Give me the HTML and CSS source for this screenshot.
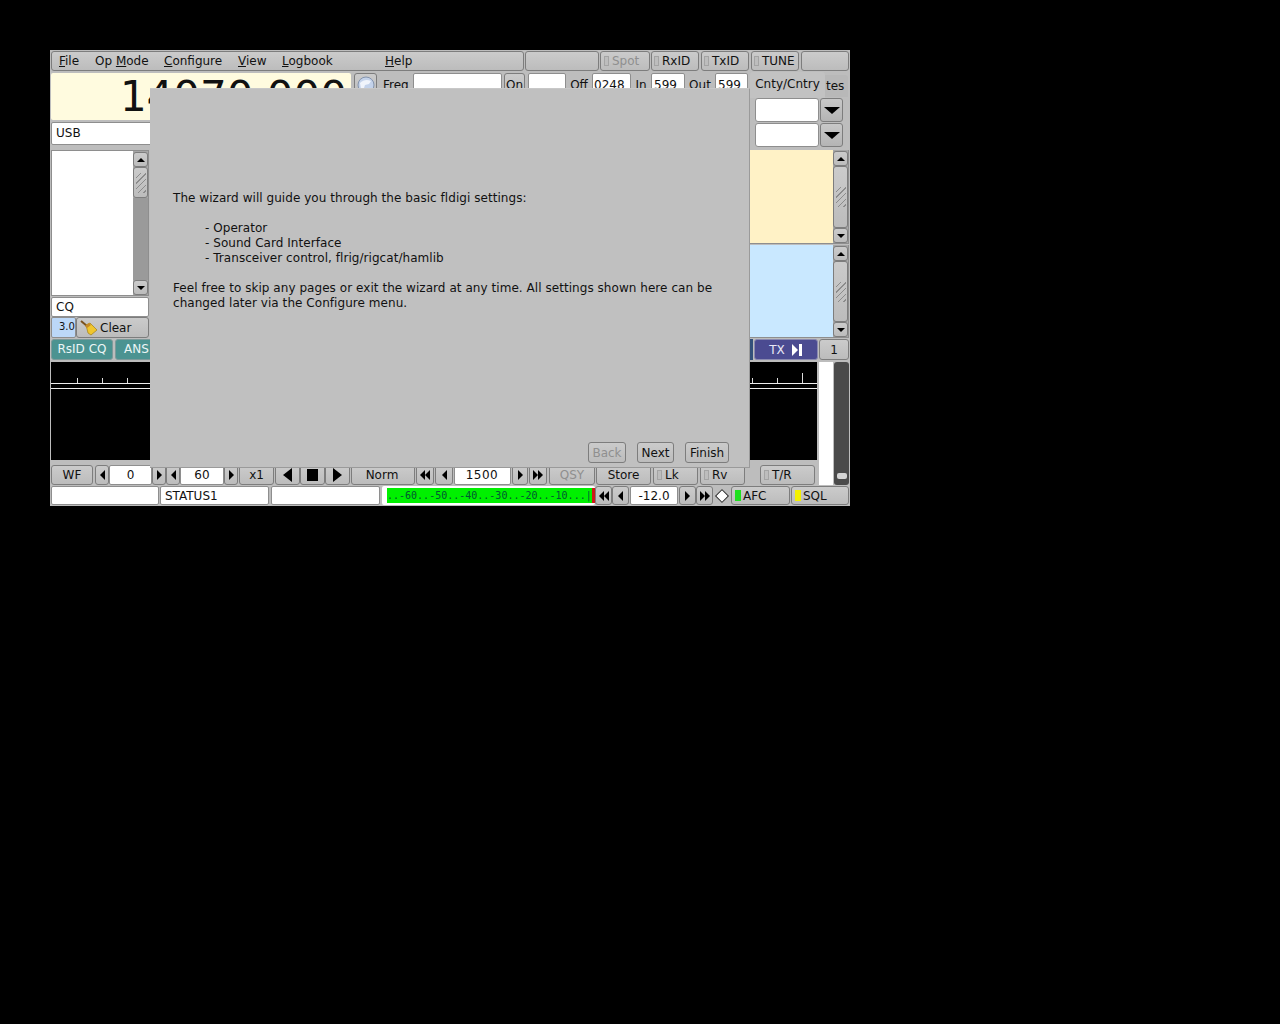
FILE: index.html
```html
<!DOCTYPE html>
<html lang="en">
<head>
  <meta charset="UTF-8" />
  <title>fldigi</title>
  <link rel="stylesheet" href="styles.css">
</head>
<body>

<div class="window">

  <!-- Menu row -->
  <div class="menu-row">
    <div class="menubar">
      <span class="menu w-file"><u>F</u>ile</span>
      <span class="menu w-mode">Op <u>M</u>ode</span>
      <span class="menu w-conf"><u>C</u>onfigure</span>
      <span class="menu w-view"><u>V</u>iew</span>
      <span class="menu w-log"><u>L</u>ogbook</span>
      <span class="menu"><u>H</u>elp</span>
    </div>
    <div class="btn w-blank"></div>
    <div class="btn w-spot dim"><i class="led"></i>Spot</div>
    <div class="btn w-rxid"><i class="led"></i>RxID</div>
    <div class="btn w-txid"><i class="led"></i>TxID</div>
    <div class="btn w-tune"><i class="led"></i>TUNE</div>
    <div class="btn w-last"></div>
  </div>

  <!-- Frequency and log fields -->
  <div class="top-row">
    <div class="freq-col">
      <div class="freq">14070.000</div>
      <div class="field usb">USB</div>
    </div>
    <div class="log-fields">
      <div class="btn globe">
        <svg width="18" height="18" viewBox="0 0 18 18">
          <circle cx="9" cy="9" r="8" fill="#c3d2ea" stroke="#8494ad"/>
          <path d="M3 7c3-3 7-4 11-2l-2 3-4 1-1 3-3 1z" fill="#f0f4fb"/>
        </svg>
      </div>
      <span class="lbl w-freq">Freq</span>
      <div class="field w-f1"></div>
      <div class="btn w-on">On</div>
      <div class="field w-f2"></div>
      <span class="lbl w-off">Off</span>
      <div class="field w-f3">0248</div>
      <span class="lbl w-in">In</span>
      <div class="field w-f4">599</div>
      <span class="lbl w-out">Out</span>
      <div class="field w-f5">599</div>
    </div>
    <div class="right-top">
      <div class="tabs">
        <div class="tab-on">Cnty/Cntry</div>
        <div class="tab-off">tes</div>
      </div>
      <div class="combo">
        <div class="field combo-in"></div>
        <div class="btn combo-btn"><i class="tri-down big"></i></div>
      </div>
      <div class="combo">
        <div class="field combo-in"></div>
        <div class="btn combo-btn"><i class="tri-down big"></i></div>
      </div>
    </div>
  </div>

  <!-- Text panes -->
  <div class="mid-row">
    <div class="left-col">
      <div class="pane pane-left">
        <div class="pane-text"></div>
        <div class="scroll">
          <div class="btn sb-end"><i class="tri-up"></i></div>
          <div class="btn sb-thumb short"><i class="grip"></i></div>
          <div class="sb-track"></div>
          <div class="btn sb-end"><i class="tri-down"></i></div>
        </div>
      </div>
      <div class="field cq">CQ</div>
      <div class="clear-row">
        <div class="spin-val">3.0</div>
        <div class="btn clear">
          <svg width="18" height="16" viewBox="0 0 18 16">
            <path d="M1 1l6 5" stroke="#7a5220" stroke-width="2"/>
            <path d="M6 5l4-2 7 7-6 5-3-2z" fill="#f0c62e" stroke="#a07e18" stroke-width=".7"/>
            <path d="M5 6l4-3 2 2-4 3z" fill="#c48a28"/>
          </svg>
          <span>Clear</span>
        </div>
      </div>
    </div>
    <div class="mid-gap"></div>
    <div class="right-col">
      <div class="pane pane-rx">
        <div class="pane-text yellow"></div>
        <div class="scroll">
          <div class="btn sb-end"><i class="tri-up"></i></div>
          <div class="btn sb-thumb"><i class="grip"></i></div>
          <div class="btn sb-end"><i class="tri-down"></i></div>
        </div>
      </div>
      <div class="pane pane-tx">
        <div class="pane-text blue"></div>
        <div class="scroll">
          <div class="btn sb-end"><i class="tri-up"></i></div>
          <div class="btn sb-thumb"><i class="grip"></i></div>
          <div class="btn sb-end"><i class="tri-down"></i></div>
        </div>
      </div>
    </div>
  </div>

  <!-- Macro buttons -->
  <div class="macro-row">
    <div class="macro w-rsid">RsID CQ</div>
    <div class="macro w-ans">ANS</div>
    <div class="macro-gap"></div>
    <div class="macro-edge"></div>
    <div class="tx">TX
      <svg width="12" height="12" viewBox="0 0 12 12"><path d="M1 0l6 6-6 6z" fill="#fff"/><path d="M8 0h3v12H8z" fill="#fff"/></svg>
    </div>
    <div class="btn bank">1</div>
  </div>

  <!-- Waterfall, its controls and the signal slider -->
  <div class="wf-row">
    <div class="wf-main">
      <div class="wf">
        <div class="scale"><i></i><i></i><i></i><i></i><i></i><i></i><i></i><i></i><i></i><i></i><i></i><i></i><i></i><i></i><i></i><i></i><i></i><i></i><i></i><i></i><i></i><i></i><i></i><i></i><i></i><i></i><i></i><i></i><i></i><i></i></div>
        <div class="wf-line"></div>
      </div>
      <div class="controls">
        <div class="btn c-wf">WF</div>
        <div class="btn c-arr"><i class="tri-left"></i></div>
        <div class="field c-0">0</div>
        <div class="btn c-arr"><i class="tri-right"></i></div>
        <div class="btn c-arr"><i class="tri-left"></i></div>
        <div class="field c-60">60</div>
        <div class="btn c-arr"><i class="tri-right"></i></div>
        <div class="btn c-x1">x1</div>
        <div class="btn c-play"><i class="tri-left big"></i></div>
        <div class="btn c-play"><i class="stop"></i></div>
        <div class="btn c-play"><i class="tri-right big"></i></div>
        <div class="btn c-norm">Norm</div>
        <div class="btn c-dbl"><i class="tri-left"></i><i class="tri-left"></i></div>
        <div class="btn c-dbl"><i class="tri-left"></i></div>
        <div class="field c-1500">1500</div>
        <div class="btn c-r1"><i class="tri-right"></i></div>
        <div class="btn c-dbl"><i class="tri-right"></i><i class="tri-right"></i></div>
        <div class="btn c-qsy dim">QSY</div>
        <div class="btn c-store">Store</div>
        <div class="btn c-lk"><i class="led"></i>Lk</div>
        <div class="btn c-lk"><i class="led"></i>Rv</div>
        <div class="btn c-tr"><i class="led"></i>T/R</div>
      </div>
    </div>
    <div class="white-strip"></div>
    <div class="slider"><i class="slider-knob"></i></div>
  </div>

  <!-- Status row -->
  <div class="status-row">
    <div class="field s-blank s-first"></div>
    <div class="field s-blank s-status">STATUS1</div>
    <div class="field s-blank"></div>
    <div class="meter"><div class="meter-scale">..-60..-50..-40..-30..-20..-10...|</div><i class="meter-red"></i></div>
    <div class="btn s-arr"><i class="tri-left"></i><i class="tri-left"></i></div>
    <div class="btn s-arr"><i class="tri-left"></i></div>
    <div class="field s-val">-12.0</div>
    <div class="btn s-arr"><i class="tri-right"></i></div>
    <div class="btn s-arr"><i class="tri-right"></i><i class="tri-right"></i></div>
    <div class="diamond-box"><i class="diamond"></i></div>
    <div class="btn s-afc"><i class="led on-green"></i>AFC</div>
    <div class="btn s-sql"><i class="led on-yellow"></i>SQL</div>
  </div>

  <!-- Wizard dialog -->
  <div class="wizard">
    <div class="wizard-text">
      <p>The wizard will guide you through the basic fldigi settings:</p>
      <ul>
        <li>- Operator</li>
        <li>- Sound Card Interface</li>
        <li>- Transceiver control, flrig/rigcat/hamlib</li>
      </ul>
      <p>Feel free to skip any pages or exit the wizard at any time. All settings shown here can be<br>changed later via the Configure menu.</p>
    </div>
    <div class="wizard-btns">
      <div class="btn wz-back dim">Back</div>
      <div class="btn wz-next">Next</div>
      <div class="btn wz-finish">Finish</div>
    </div>
  </div>

</div>

</body>
</html>
```

FILE: styles.css
```css
body {
  margin: 0;
  padding: 50px 0 0 50px;
  background: #000;
  color: #111;
  font-family: "DejaVu Sans", sans-serif;
  font-size: 12px;
}

.window {
  position: relative;
  width: 800px;
  height: 456px;
  padding: 1px;
  box-sizing: border-box;
  background: #bdbdbd;
  overflow: hidden;
}

/* generic widgets */
.btn {
  display: flex;
  align-items: center;
  justify-content: center;
  flex: none;
  box-sizing: border-box;
  height: 100%;
  border: 1px solid #7d7d7d;
  border-radius: 3px;
  background: linear-gradient(#cbcbcb, #bcbcbc);
  white-space: nowrap;
}

.dim {
  color: #8f8f8f;
}

.field {
  display: flex;
  align-items: center;
  flex: none;
  box-sizing: border-box;
  height: 100%;
  padding-left: 4px;
  background: #fff;
  border: 1px solid #8e8e8e;
  border-radius: 2px;
  white-space: nowrap;
  overflow: hidden;
}

.led {
  display: block;
  flex: none;
  box-sizing: border-box;
  width: 5px;
  height: 10px;
  margin-right: 3px;
  border: 1px solid #a4a4a4;
  background: #bdbdbd;
}

.on-green {
  width: 6px;
  height: 11px;
  margin-right: 2px;
  background: #1fe01f;
  border-color: #1fe01f;
}

.on-yellow {
  width: 6px;
  height: 11px;
  margin-right: 2px;
  background: #f4f000;
  border-color: #f4f000;
}

.tri-up, .tri-down, .tri-left, .tri-right {
  display: block;
  width: 0;
  height: 0;
  border-style: solid;
  border-color: transparent;
}

.tri-up {
  border-width: 0 4px 4px;
  border-bottom-color: #000;
}

.tri-down {
  border-width: 4px 4px 0;
  border-top-color: #000;
}

.tri-down.big {
  border-width: 7px 8px 0;
}

.tri-left {
  border-width: 5px 5px 5px 0;
  border-right-color: #000;
}

.tri-right {
  border-width: 5px 0 5px 5px;
  border-left-color: #000;
}

.tri-left.big {
  border-width: 7px 9px 7px 0;
}

.tri-right.big {
  border-width: 7px 0 7px 9px;
}

.stop {
  display: block;
  width: 11px;
  height: 12px;
  background: #000;
}

/* menu row */
.menu-row {
  display: flex;
  height: 20px;
  gap: 1px;
}

.menubar {
  display: flex;
  align-items: center;
  flex: none;
  box-sizing: border-box;
  width: 473px;
  height: 100%;
  padding: 0 0 1px 7px;
  border: 1px solid #7d7d7d;
  border-radius: 3px;
  background: linear-gradient(#cbcbcb, #bcbcbc);
}

.menu {
  flex: none;
}

.w-file { width: 36px; }
.w-mode { width: 69px; }
.w-conf { width: 74px; }
.w-view { width: 44px; }
.w-log { width: 103px; }

.w-blank { width: 74px; }
.w-spot { width: 50px; justify-content: flex-start; padding-left: 3px; }
.w-rxid { width: 48px; justify-content: flex-start; padding-left: 2px; }
.w-txid { width: 48px; margin-left: 1px; justify-content: flex-start; padding-left: 2px; }
.w-tune { width: 48px; margin-left: 1px; justify-content: flex-start; padding-left: 2px; }
.w-last { width: 48px; margin-left: 1px; }

/* top block */
.top-row {
  display: flex;
  height: 76px;
  margin-top: 2px;
}

.freq-col {
  flex: none;
  width: 300px;
}

.freq {
  box-sizing: border-box;
  height: 47px;
  padding-right: 4px;
  background: #fffbdf;
  font-size: 42px;
  line-height: 47px;
  text-align: right;
  border-radius: 2px;
  overflow: hidden;
}

.usb {
  height: 23px;
  margin-top: 2px;
  padding-bottom: 1px;
}

.log-fields {
  display: flex;
  align-items: flex-start;
  flex: none;
  width: 399px;
}

.log-fields > * {
  height: 23px;
}

.lbl {
  flex: none;
  line-height: 24px;
  text-align: center;
}

.globe { width: 23px; margin-left: 3px; }
.w-freq { width: 30px; margin-left: 6px; text-align: left; }
.w-f1 { width: 89px; }
.w-on { width: 21px; margin-left: 2px; }
.w-f2 { width: 38px; margin-left: 3px; }
.w-off { width: 26px; }
.w-f3 { width: 39px; padding-left: 1px; }
.w-in { width: 20px; }
.w-f4 { width: 34px; padding-left: 2px; }
.w-out { width: 30px; }
.w-f5 { width: 33px; padding-left: 2px; }

.right-top {
  flex: none;
  width: 99px;
  margin-top: -1px;
}

.tabs {
  display: flex;
  height: 26px;
}

.tab-on {
  flex: none;
  width: 75px;
  line-height: 25px;
  text-align: center;
  background: #c2c2c2;
  border-radius: 3px 3px 0 0;
}

.tab-off {
  flex: none;
  width: 23px;
  height: 22px;
  margin-top: 3px;
  line-height: 22px;
  text-indent: 1px;
  background: #b8b8b8;
  border-radius: 0 3px 0 0;
}

.combo {
  display: flex;
  height: 24px;
  margin: 0 6px 1px 5px;
}

.combo-in {
  width: 64px;
  border-radius: 3px;
}

.combo-btn {
  width: 23px;
  margin-left: 1px;
  background: linear-gradient(#c8c8c8, #b4b4b4);
}

/* text panes */
.mid-row {
  display: flex;
  height: 188px;
  margin-top: 1px;
}

.left-col {
  flex: none;
  width: 98px;
}

.mid-gap {
  flex: none;
  width: 601px;
}

.right-col {
  display: flex;
  flex-direction: column;
  flex: none;
  gap: 1px;
  width: 99px;
}

.pane {
  display: flex;
  box-sizing: border-box;
  border: 1px solid #8e8e8e;
}

.pane-left {
  height: 146px;
}

.pane-rx {
  height: 94px;
  border-width: 0 1px 1px 0;
}

.pane-tx {
  height: 93px;
  border-width: 0 1px 1px 0;
}

.pane-text {
  flex: 1;
  background: #fff;
}

.yellow {
  background: #fff2c6;
}

.blue {
  background: #c9e8ff;
}

.scroll {
  display: flex;
  flex-direction: column;
  flex: none;
  box-sizing: border-box;
  width: 15px;
  padding-top: 1px;
  background: #a6a6a6;
}

.sb-end {
  flex: none;
  height: 15px;
}

.sb-thumb {
  flex: 1;
  height: auto;
}

.sb-thumb.short {
  flex: none;
  height: 31px;
}

.sb-track {
  flex: 1;
  background: #9a9a9a;
}

.grip {
  display: block;
  width: 10px;
  height: 20px;
  background: repeating-linear-gradient(135deg, transparent 0 3px, #8c8c8c 3px 4px);
}

.cq {
  height: 20px;
  margin-top: 1px;
}

.clear-row {
  display: flex;
  height: 21px;
}

.spin-val {
  flex: none;
  box-sizing: border-box;
  width: 25px;
  padding-left: 7px;
  background: #bcd8f8;
  border: 1px solid #8e8e8e;
  border-radius: 2px;
  font-size: 10px;
  line-height: 18px;
  white-space: nowrap;
}

.clear {
  flex: 1;
  justify-content: flex-start;
  gap: 2px;
  padding-left: 3px;
}

/* macro row */
.macro-row {
  display: flex;
  height: 21px;
  margin-top: 1px;
}

.macro {
  flex: none;
  box-sizing: border-box;
  height: 100%;
  background: #4b9391;
  color: #ecf6f6;
  border: 1px solid #7d9a9a;
  border-radius: 3px;
  line-height: 19px;
  text-align: center;
}

.w-rsid { width: 62px; }
.w-ans { width: 60px; margin-left: 2px; padding-left: 8px; text-align: left; }

.macro-gap {
  flex: 1;
}

.macro-edge {
  flex: none;
  width: 3px;
  height: 100%;
  background: #33507a;
}

.tx {
  display: flex;
  align-items: center;
  justify-content: center;
  flex: none;
  gap: 6px;
  box-sizing: border-box;
  width: 64px;
  height: 100%;
  margin-left: 1px;
  background: #4b4b91;
  color: #e8e8f6;
  border: 1px solid #8a8ab0;
  border-radius: 3px;
}

.bank {
  width: 30px;
  margin-left: 1px;
}

/* waterfall */
.wf-row {
  display: flex;
  height: 123px;
  margin-top: 2px;
}

.wf-main {
  flex: none;
  width: 766px;
}

.wf {
  position: relative;
  height: 98px;
  background: #000;
}

.scale {
  display: flex;
  justify-content: space-between;
  align-items: flex-end;
  box-sizing: border-box;
  height: 22px;
  padding: 0 14px 0 26px;
  border-bottom: 1px solid #eee;
}

.scale i {
  display: block;
  width: 1px;
  height: 5px;
  background: #ddd;
}

.scale i:last-child {
  height: 10px;
}

.wf-line {
  height: 5px;
  box-sizing: border-box;
  border-bottom: 1px solid #eee;
}

.controls {
  display: flex;
  height: 20px;
  margin-top: 5px;
}

.c-wf { width: 42px; margin-right: 2px; }
.c-arr { width: 14px; }
.c-0 { width: 43px; justify-content: center; padding: 0; }
.c-60 { width: 44px; justify-content: center; padding: 0; }
.c-x1 { width: 35px; margin: 0 1px; }
.c-play { width: 25px; }
.c-norm { width: 64px; margin: 0 1px; padding-right: 2px; }
.c-dbl { width: 18px; margin-right: 1px; }
.c-1500 { width: 57px; justify-content: center; padding: 0 1px 0 0; letter-spacing: .5px; }
.c-r1 { width: 16px; margin: 0 1px; }
.c-qsy { width: 46px; margin-left: 1px; }
.c-store { width: 55px; margin-left: 1px; }
.c-lk { width: 45px; margin-left: 2px; justify-content: flex-start; padding-left: 3px; }
.c-tr { width: 55px; margin-left: 15px; justify-content: flex-start; padding-left: 3px; }

.white-strip {
  flex: none;
  width: 14px;
  margin-left: 2px;
  background: #fff;
}

.slider {
  position: relative;
  flex: none;
  width: 15px;
  margin-left: 1px;
  background: #4a4a4a;
  border-radius: 3px;
}

.slider-knob {
  position: absolute;
  left: 3px;
  bottom: 6px;
  width: 10px;
  height: 6px;
  background: #d4d4d4;
  border-radius: 2px;
}

/* status row */
.status-row {
  display: flex;
  height: 19px;
  margin-top: 1px;
}

.s-blank {
  width: 109px;
  margin-right: 1px;
}

.s-first {
  width: 108px;
}

.s-status {
  margin-right: 2px;
}

.meter {
  display: flex;
  flex: none;
  box-sizing: border-box;
  width: 213px;
  height: 100%;
  margin-left: 1px;
  padding: 2px 0 2px 5px;
  background: #fff;
  border-radius: 2px;
}

.meter-scale {
  flex: 1;
  background: #00f000;
  color: #053;
  font-family: "DejaVu Sans Mono", monospace;
  font-size: 10px;
  line-height: 15px;
  white-space: nowrap;
}

.meter-red {
  display: block;
  flex: none;
  width: 3px;
  background: #d01818;
}

.s-arr { width: 17px; }
.s-val { width: 48px; margin: 0 1px; justify-content: center; padding: 0; }

.diamond-box {
  display: flex;
  align-items: center;
  justify-content: center;
  flex: none;
  width: 18px;
  height: 100%;
}

.diamond {
  display: block;
  width: 8px;
  height: 8px;
  background: #fff;
  border: 1px solid #222;
  transform: rotate(45deg);
}

.s-afc { width: 59px; justify-content: flex-start; padding-left: 3px; }
.s-sql { width: 58px; margin-left: 1px; justify-content: flex-start; padding-left: 3px; }

/* wizard dialog sits over the main window */
.wizard {
  position: absolute;
  left: 100px;
  top: 38px;
  display: flex;
  flex-direction: column;
  box-sizing: border-box;
  width: 600px;
  height: 380px;
  background: #c0c0c0;
  border-top: 1px solid #c8c8c8;
  border-right: 1px solid #9a9a9a;
  border-bottom: 1px solid #9a9a9a;
}

.wizard-text {
  flex: 1;
  padding: 102px 0 0 23px;
  font-size: 12px;
  letter-spacing: .05px;
  line-height: 15px;
}

.wizard-text p {
  margin: 0;
}

.wizard-text ul {
  margin: 15px 0;
  padding: 0 0 0 32px;
  list-style: none;
}

.wizard-btns {
  display: flex;
  justify-content: flex-end;
  gap: 11px;
  height: 21px;
  padding: 0 20px 4px 0;
}

.wz-back { width: 38px; }
.wz-next { width: 37px; }
.wz-finish { width: 44px; }
```
